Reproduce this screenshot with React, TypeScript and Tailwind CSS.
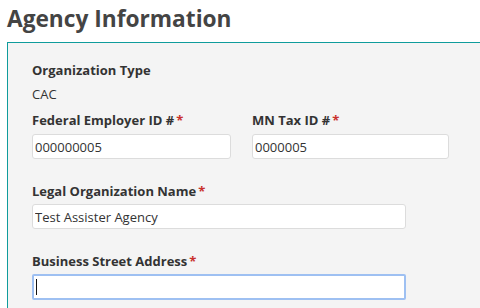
import React from "react";

const font = { fontFamily: '"Open Sans", "Noto Sans", sans-serif' };

function Label({ text, req }: { text: string; req?: boolean }) {
  return (
    <div className="text-[13px] leading-[18px] font-bold text-[#333333]">
      {text}
      {req && <span className="text-[#c9302c] ml-[2px]">*</span>}
    </div>
  );
}

export default function App() {
  return (
    <div className="w-[480px] h-[308px] overflow-hidden bg-white" style={font}>
      <h1 className="text-[22.7px] leading-[28px] font-bold text-[#444444] pl-[7px] pt-[5px] h-[42px]">
        Agency Information
      </h1>
      <div className="ml-[7px] border-t border-l border-[#0f9c9c] bg-[#f4f4f4] h-[300px] pl-[24px] pt-[18px]">
        <Label text="Organization Type" />
        <div className="text-[13px] leading-[18px] text-[#333333] mt-[6px]">CAC</div>
        <div className="flex mt-[8px]">
          <div className="w-[220px]">
            <Label text="Federal Employer ID #" req />
            <input
              readOnly
              value="000000005"
              className="mt-[5px] w-[199px] h-[25px] bg-white border border-[#dcdcdc] rounded-[3px] px-[2px] text-[13px] text-[#333333] outline-none"
            />
          </div>
          <div>
            <Label text="MN Tax ID #" req />
            <input
              readOnly
              value="0000005"
              className="mt-[5px] w-[197px] h-[25px] bg-white border border-[#dcdcdc] rounded-[3px] px-[2px] text-[13px] text-[#333333] outline-none"
            />
          </div>
        </div>
        <div className="mt-[23px]">
          <Label text="Legal Organization Name" req />
          <input
            readOnly
            value="Test Assister Agency"
            className="mt-[4px] w-[374px] h-[25px] bg-white border border-[#dcdcdc] rounded-[3px] px-[2px] text-[13px] text-[#333333] outline-none"
          />
        </div>
        <div className="mt-[23px]">
          <Label text="Business Street Address" req />
          <div className="mt-[4px] w-[374px] h-[26px] bg-white border-2 border-[#9ec0f2] rounded-[2px] flex items-center pl-[2px]">
            <div className="w-[1px] h-[16px] bg-[#111111]" />
          </div>
        </div>
      </div>
    </div>
  );
}
